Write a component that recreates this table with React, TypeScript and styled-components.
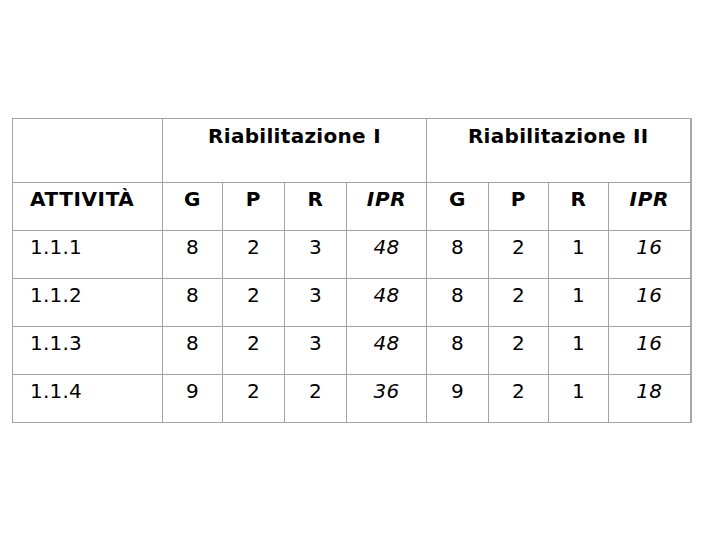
import styled, { createGlobalStyle } from "styled-components";

const GlobalStyle = createGlobalStyle`
  html, body {
    margin: 0;
    padding: 0;
    background: #ffffff;
  }
  body {
    font-family: "DejaVu Sans", Verdana, sans-serif;
    color: #000;
  }
`;

const Page = styled.div`
  width: 720px;
  height: 540px;
  padding: 118px 0 0 12px;
  box-sizing: border-box;
`;

const Table = styled.table`
  border-collapse: collapse;
  table-layout: fixed;
  width: 679px;
  font-size: 20px;
  border-right: 2px solid #a8a8a8;
`;

const Row = styled.tr<{ tall?: boolean }>`
  height: ${(p) => (p.tall ? "64px" : "48px")};
`;

const Cell = styled.td<{ left?: boolean; italic?: boolean; bold?: boolean }>`
  border: 1px solid #a3a3a3;
  padding: 4px 0 0;
  padding-left: ${(p) => (p.left ? "17px" : "0")};
  text-align: ${(p) => (p.left ? "left" : "center")};
  vertical-align: top;
  font-style: ${(p) => (p.italic ? "italic" : "normal")};
  font-weight: ${(p) => (p.bold ? "bold" : "normal")};
  letter-spacing: ${(p) => (p.bold ? "0.6px" : "0.2px")};
  white-space: nowrap;
`;

const GroupHead = styled.th`
  border: 1px solid #a3a3a3;
  padding: 5px 0 0;
  text-align: center;
  vertical-align: top;
  font-weight: bold;
  letter-spacing: 0.3px;
`;

const widths = [150, 60, 62, 62, 80, 62, 60, 60, 82];

interface Activity {
  code: string;
  first: [number, number, number, number];
  second: [number, number, number, number];
}

const rows: Activity[] = [
  { code: "1.1.1", first: [8, 2, 3, 48], second: [8, 2, 1, 16] },
  { code: "1.1.2", first: [8, 2, 3, 48], second: [8, 2, 1, 16] },
  { code: "1.1.3", first: [8, 2, 3, 48], second: [8, 2, 1, 16] },
  { code: "1.1.4", first: [9, 2, 2, 36], second: [9, 2, 1, 18] },
];

const heads = ["G", "P", "R", "IPR"];

function App() {
  return (
    <Page>
      <GlobalStyle />
      <Table>
        <colgroup>
          {widths.map((w, i) => (
            <col key={i} style={{ width: w }} />
          ))}
        </colgroup>
        <thead>
          <Row tall>
            <GroupHead />
            <GroupHead colSpan={4}>Riabilitazione I</GroupHead>
            <GroupHead colSpan={4}>Riabilitazione II</GroupHead>
          </Row>
          <Row>
            <Cell left bold>
              ATTIVITÀ
            </Cell>
            {[...heads, ...heads].map((h, i) => (
              <Cell key={i} bold italic={h === "IPR"}>
                {h}
              </Cell>
            ))}
          </Row>
        </thead>
        <tbody>
          {rows.map((r) => (
            <Row key={r.code}>
              <Cell left>{r.code}</Cell>
              {[...r.first, ...r.second].map((v, i) => (
                <Cell key={i} italic={i % 4 === 3}>
                  {v}
                </Cell>
              ))}
            </Row>
          ))}
        </tbody>
      </Table>
    </Page>
  );
}

export default App;
